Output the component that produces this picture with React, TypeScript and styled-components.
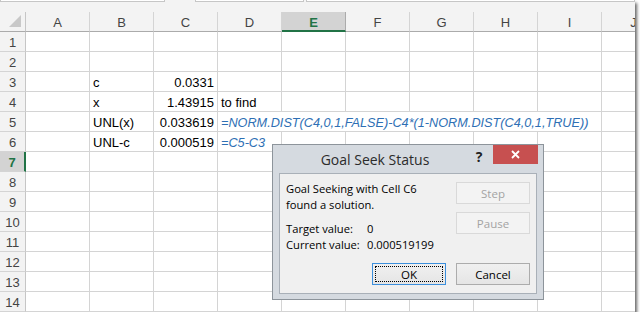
import React from 'react';
import styled, { createGlobalStyle } from 'styled-components';

const GlobalStyle = createGlobalStyle`
  body {
    margin: 0;
    background: #fff;
  }
`;

const Frame = styled.div`
  position: relative;
  width: 635px;
  height: 312px;
  overflow: hidden;
  background: #f3f3f3;
  box-shadow: 2px 3px 3px rgba(0, 0, 0, 0.6);
  font-family: "Liberation Sans", Arial, sans-serif;
`;

const TopStrip = styled.div`
  display: flex;
  align-items: flex-start;
  height: 12px;
`;

const FieldBox = styled.div<{ $w: number; $gap: number }>`
  width: ${p => p.$w}px;
  margin-left: ${p => p.$gap}px;
  height: 1px;
  background: #fff;
  border: 1px solid #c6c6c6;
  border-top: none;
`;

const Sheet = styled.div`
  display: grid;
  grid-template-columns: 26px repeat(10, 64px);
  grid-auto-rows: 20px;
`;

const Corner = styled.div`
  display: flex;
  align-items: flex-end;
  justify-content: flex-end;
  padding: 0 4px 4px 0;
  box-sizing: border-box;
  border-right: 1px solid #c6c6c6;
  border-bottom: 1px solid #ababab;
`;

const Triangle = styled.div`
  width: 0;
  height: 0;
  border-left: 12px solid transparent;
  border-bottom: 12px solid #c8c8c8;
`;

const ColHead = styled.div<{ $active?: boolean }>`
  display: flex;
  align-items: center;
  justify-content: center;
  box-sizing: border-box;
  padding-top: 2px;
  font-size: 13px;
  color: ${p => (p.$active ? '#217346' : '#444')};
  font-weight: ${p => (p.$active ? 700 : 400)};
  background: ${p => (p.$active ? '#d3d3d3' : '#f3f3f3')};
  border-right: 1px solid ${p => (p.$active ? '#ababab' : '#d4d4d4')};
  border-bottom: ${p => (p.$active ? '2px solid #217346' : '1px solid #ababab')};
`;

const RowHead = styled.div<{ $active?: boolean }>`
  display: flex;
  align-items: center;
  justify-content: center;
  box-sizing: border-box;
  padding-top: 2px;
  font-size: 13px;
  color: ${p => (p.$active ? '#217346' : '#444')};
  font-weight: ${p => (p.$active ? 700 : 400)};
  background: ${p => (p.$active ? '#d3d3d3' : '#f3f3f3')};
  border-right: ${p => (p.$active ? '2px solid #217346' : '1px solid #c6c6c6')};
  border-bottom: 1px solid #d4d4d4;
`;

const Cell = styled.div<{ $align?: 'left' | 'right'; $span?: number; $formula?: boolean }>`
  display: flex;
  align-items: center;
  justify-content: ${p => (p.$align === 'right' ? 'flex-end' : 'flex-start')};
  grid-column: span ${p => p.$span || 1};
  box-sizing: border-box;
  padding: 2px 3px 0 3px;
  background: #fff;
  border-right: 1px solid #d4d4d4;
  border-bottom: 1px solid #d4d4d4;
  font-size: ${p => (p.$formula ? '12.7px' : '13px')};
  white-space: nowrap;
  color: ${p => (p.$formula ? '#2e6fb4' : '#000')};
  font-style: ${p => (p.$formula ? 'italic' : 'normal')};
`;

/* dialog */

const Dialog = styled.div`
  position: absolute;
  left: 272px;
  top: 144px;
  width: 272px;
  height: 156px;
  box-sizing: border-box;
  display: flex;
  flex-direction: column;
  background: #d5dae0;
  border: 1px solid #8d949b;
  font-family: "Open Sans", "Liberation Sans", sans-serif;
`;

const TitleBar = styled.div`
  display: flex;
  align-items: flex-start;
  height: 28px;
  padding-right: 5px;
`;

const Title = styled.div`
  flex: 1;
  text-align: center;
  padding: 5px 0 0 12px;
  font-size: 14px;
  color: #2b2b2b;
`;

const HelpBtn = styled.div`
  width: 28px;
  padding-top: 2px;
  text-align: center;
  font-size: 14px;
  font-weight: 700;
  color: #222;
`;

const CloseBtn = styled.div`
  width: 45px;
  height: 19px;
  display: flex;
  align-items: center;
  justify-content: center;
  background: #c75050;
`;

const Client = styled.div`
  flex: 1;
  margin: 0 6px 5px 6px;
  display: flex;
  flex-direction: column;
  padding: 7px 6px 8px 6px;
  background: #f0f0f0;
  border: 1px solid #a9b0b8;
  font-size: 11.2px;
  color: #000;
`;

const TopArea = styled.div`
  display: flex;
  justify-content: space-between;
`;

const Message = styled.div`
  line-height: 16px;
`;

const Values = styled.div`
  display: grid;
  grid-template-columns: 81px auto;
  margin-top: 8px;
  line-height: 16px;
`;

const SideButtons = styled.div`
  display: flex;
  flex-direction: column;
  gap: 8px;
  padding-top: 1px;
`;

const BottomButtons = styled.div`
  display: flex;
  justify-content: flex-end;
  gap: 10px;
  margin-top: auto;
`;

const Button = styled.div<{ $kind?: 'default' | 'disabled' }>`
  position: relative;
  width: 74px;
  height: 22px;
  box-sizing: border-box;
  display: flex;
  align-items: center;
  justify-content: center;
  font-size: 11.5px;
  color: ${p => (p.$kind === 'disabled' ? '#a3a3a3' : '#000')};
  border: 1px solid
    ${p => (p.$kind === 'default' ? '#3c8fdc' : p.$kind === 'disabled' ? '#d9d9d9' : '#acacac')};
  background: ${p =>
    p.$kind === 'disabled' ? '#f3f3f3' : 'linear-gradient(#f0f0f0, #e5e5e5)'};
`;

const FocusRing = styled.div`
  position: absolute;
  inset: 2px;
  border: 1px dotted #000;
`;

const cols = ['A', 'B', 'C', 'D', 'E', 'F', 'G', 'H', 'I', 'J'];

type Row = { b?: string; c?: string; d?: string; formula?: boolean; span?: number };

const data: Record<number, Row> = {
  3: { b: 'c', c: '0.0331' },
  4: { b: 'x', c: '1.43915', d: 'to find' },
  5: {
    b: 'UNL(x)',
    c: '0.033619',
    d: '=NORM.DIST(C4,0,1,FALSE)-C4*(1-NORM.DIST(C4,0,1,TRUE))',
    formula: true,
    span: 6,
  },
  6: { b: 'UNL-c', c: '0.000519', d: '=C5-C3', formula: true },
};

const SheetRow: React.FC<{ n: number }> = ({ n }) => {
  const r = data[n] || {};
  const span = r.span || 1;
  const rest = 10 - 3 - span;
  return (
    <>
      <RowHead $active={n === 7}>{n}</RowHead>
      <Cell />
      <Cell>{r.b}</Cell>
      <Cell $align="right">{r.c}</Cell>
      <Cell $span={span} $formula={r.formula}>{r.d}</Cell>
      {Array.from({ length: rest }).map((_, i) => (
        <Cell key={i} />
      ))}
    </>
  );
};

export default function App() {
  const rows = Array.from({ length: 14 }, (_, i) => i + 1);
  return (
    <>
      <GlobalStyle />
      <Frame>
        <TopStrip>
          <FieldBox $w={165} $gap={0} />
          <FieldBox $w={108} $gap={30} />
          <FieldBox $w={330} $gap={2} />
        </TopStrip>
        <Sheet>
          <Corner>
            <Triangle />
          </Corner>
          {cols.map(c => (
            <ColHead key={c} $active={c === 'E'}>
              {c}
            </ColHead>
          ))}
          {rows.map(n => (
            <SheetRow key={n} n={n} />
          ))}
        </Sheet>

        <Dialog>
          <TitleBar>
            <Title>Goal Seek Status</Title>
            <HelpBtn>?</HelpBtn>
            <CloseBtn>
              <svg width="9" height="9" viewBox="0 0 9 9">
                <path d="M1 1 L8 8 M8 1 L1 8" stroke="#fff" strokeWidth="1.8" />
              </svg>
            </CloseBtn>
          </TitleBar>
          <Client>
            <TopArea>
              <div>
                <Message>
                  Goal Seeking with Cell C6
                  <br />
                  found a solution.
                </Message>
                <Values>
                  <span>Target value:</span>
                  <span>0</span>
                  <span>Current value:</span>
                  <span>0.000519199</span>
                </Values>
              </div>
              <SideButtons>
                <Button $kind="disabled">Step</Button>
                <Button $kind="disabled">Pause</Button>
              </SideButtons>
            </TopArea>
            <BottomButtons>
              <Button $kind="default">
                OK
                <FocusRing />
              </Button>
              <Button>Cancel</Button>
            </BottomButtons>
          </Client>
        </Dialog>
      </Frame>
    </>
  );
}
